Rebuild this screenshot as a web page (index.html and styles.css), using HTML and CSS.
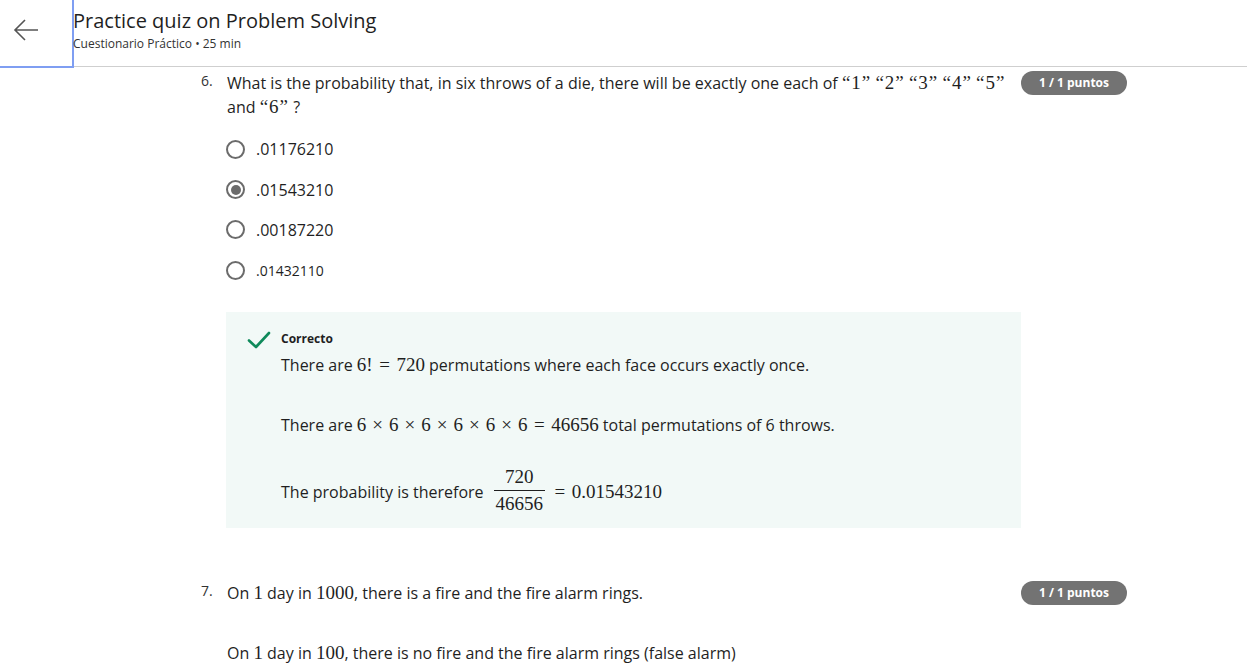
FILE: index.html
```html
<!DOCTYPE html>
<html lang="en">
<head>
<meta charset="utf-8">
<title>Practice quiz on Problem Solving</title>
<link rel="stylesheet" href="styles.css">
</head>
<body>
<header class="topbar">
  <button class="back" aria-label="Back">
    <svg width="26" height="22" viewBox="0 0 26 22" fill="none" stroke="#555" stroke-width="1.6">
      <path d="M25 11H2M12 1L2 11l10 10"/>
    </svg>
  </button>
  <div class="titles">
    <div class="title">Practice quiz on Problem Solving</div>
    <div class="subtitle">Cuestionario Práctico • 25 min</div>
  </div>
</header>

<main class="content">
  <section class="question">
    <div class="qhead">
      <div class="qnum">6.</div>
      <div class="qtext">What is the probability that, in six throws of a die, there will be exactly one each of <span class="m q">“1”</span> <span class="m q">“2”</span> <span class="m q">“3”</span> <span class="m q">“4”</span> <span class="m q">“5”</span> and <span class="m q">“6”</span> ?</div>
      <div class="badge">1 / 1 puntos</div>
    </div>
    <div class="options">
      <div class="opt"><span class="radio"></span><span>.01176210</span></div>
      <div class="opt"><span class="radio on"></span><span>.01543210</span></div>
      <div class="opt"><span class="radio"></span><span>.00187220</span></div>
      <div class="opt small"><span class="radio"></span><span>.01432110</span></div>
    </div>
    <div class="feedback">
      <svg class="check" width="24" height="20" viewBox="0 0 24 20" fill="none" stroke="#0f8a5b" stroke-width="2.6" stroke-linecap="round" stroke-linejoin="round">
        <path d="M2 10.5l7 6.5L22 3"/>
      </svg>
      <div class="fbody">
        <div class="fhead">Correcto</div>
        <p>There are <span class="m">6!<span class="rel">=</span>720</span> permutations where each face occurs exactly once.</p>
        <p class="gap">There are <span class="m">6<span class="bin">×</span>6<span class="bin">×</span>6<span class="bin">×</span>6<span class="bin">×</span>6<span class="bin">×</span>6<span class="rel">=</span>46656</span> total permutations of 6 throws.</p>
        <p class="gap frac-line">The probability is therefore <span class="frac"><span class="num">720</span><span class="den">46656</span></span><span class="m"><span class="rel">=</span>0.01543210</span></p>
      </div>
    </div>
  </section>

  <section class="question q7">
    <div class="qhead">
      <div class="qnum">7.</div>
      <div class="qtext">On <span class="m">1</span> day in <span class="m">1000</span>, there is a fire and the fire alarm rings.</div>
      <div class="badge">1 / 1 puntos</div>
    </div>
    <p class="qpara">On <span class="m">1</span> day in <span class="m">100</span>, there is no fire and the fire alarm rings (false alarm)</p>
  </section>
</main>
</body>
</html>
```

FILE: styles.css
```css
* { box-sizing: border-box; }
html, body { margin: 0; padding: 0; background: #fff; }
body {
  font-family: "Open Sans", "Noto Sans", sans-serif;
  color: #1f1f1f;
  overflow: hidden;
  height: 663px;
}
.topbar {
  display: flex;
  align-items: flex-start;
  height: 67px;
  border-bottom: 1px solid #cfcfcf;
}
.back {
  flex: none;
  width: 74px;
  height: 68px;
  margin: 0;
  background: #fff;
  border: none;
  border-right: 2px solid #7f9ef2;
  border-bottom: 2px solid #7f9ef2;
  display: flex;
  align-items: center;
  justify-content: center;
  padding: 0 20px 6px 0;
}
.titles { padding-top: 8px; margin-left: -1px; }
.title { font-size: 20px; line-height: 26px; color: #1f1f1f; }
.subtitle { font-size: 12px; line-height: 17px; color: #333; margin-top: 1px; }

.content { padding-left: 201px; width: 1127px; }
.question { padding-top: 4px; }
.qhead { display: flex; align-items: flex-start; }
.qnum { width: 26px; flex: none; font-size: 14px; line-height: 24px; color: #333; margin-top: -2px; }
.qtext { flex: 1; font-size: 16px; line-height: 24px; padding-right: 4px; }
.badge {
  flex: none;
  width: 106px;
  height: 24px;
  border-radius: 12px;
  background: #737373;
  color: #fff;
  font-size: 12px;
  font-weight: 700;
  line-height: 24px;
  text-align: center;
}
.m { font-family: "Liberation Serif", "DejaVu Serif", serif; font-size: 19px; }
.m.q { letter-spacing: 1px; }
.bin { margin: 0 6px; }
.rel { margin: 0 6.5px; }

.options { margin: 10px 0 0 25px; }
.opt { display: flex; align-items: center; gap: 11px; height: 40.4px; font-size: 16px; }
.opt.small { font-size: 14px; }
.radio {
  width: 19px; height: 19px; border-radius: 50%;
  border: 2px solid #6b6b6b;
  display: flex; align-items: center; justify-content: center;
  flex: none;
}
.radio.on::after {
  content: ""; width: 10px; height: 10px; border-radius: 50%; background: #6b6b6b;
}

.feedback {
  margin: 21px 0 0 25px;
  width: 795px;
  height: 216px;
  background: #f2f9f7;
  display: flex;
  align-items: flex-start;
  gap: 10px;
  padding: 18px 20px 0 21px;
}
.check { flex: none; margin-top: 0; }
.fhead { font-size: 12px; font-weight: 700; line-height: 18px; }
.fbody p { margin: 5px 0 0; font-size: 16px; line-height: 24px; }
.fbody p.gap { margin-top: 36px; }
.frac-line { display: flex; align-items: center; margin-top: 31px !important; }
.frac {
  display: inline-flex; flex-direction: column; align-items: center;
  font-family: "Liberation Serif", "DejaVu Serif", serif; font-size: 19px;
  margin: 0 3px 0 10px;
  position: relative; top: -2px;
}
.frac .num { line-height: 22px; padding: 0 2px 2px; border-bottom: 1px solid #1f1f1f; width: 100%; text-align: center; }
.frac .den { line-height: 22px; padding: 2px 2px 0; }

.q7 { margin-top: 53px; padding-top: 0; }
.qpara { margin: 36px 0 0 26px; font-size: 16px; line-height: 24px; }
```
